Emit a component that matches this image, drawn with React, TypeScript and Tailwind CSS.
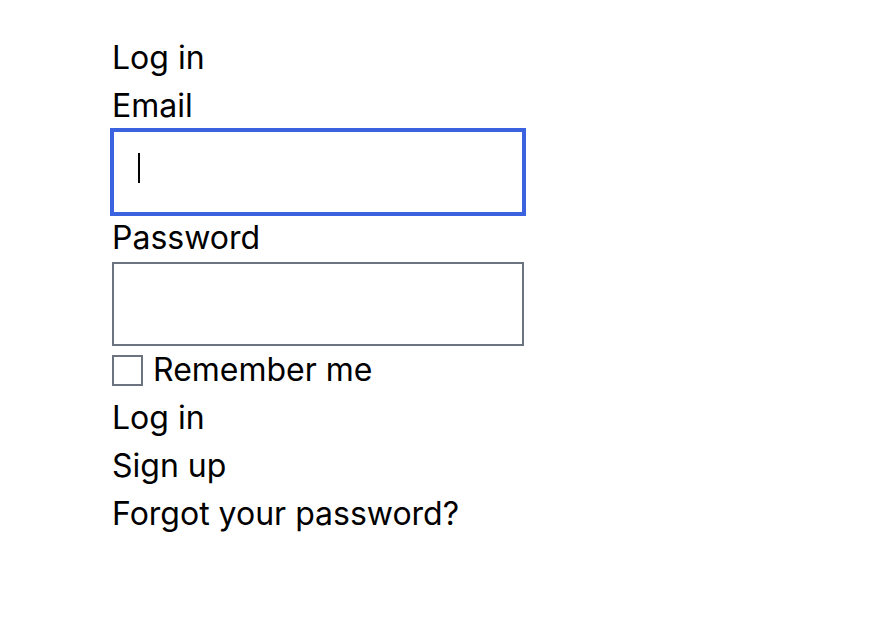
export default function App() {
  return (
    <div className="min-h-[618px] bg-white text-black" style={{ fontFamily: 'Inter, "Noto Sans", sans-serif' }}>
      <form className="flex flex-col pl-[112px] pt-[34px] text-[32px] leading-[48px]">
        <h1 className="h-[48px] font-normal">Log in</h1>
        <label className="h-[48px]">Email</label>
        <div className="flex h-[84px] w-[412px] items-start border-2 border-[#3b63e0] pl-[24px] pt-[21px] outline-2 outline-[#3b63e0]">
          <span className="block h-[30px] w-[2px] bg-black" />
        </div>
        <label className="h-[48px]">Password</label>
        <div className="h-[84px] w-[412px] border-2 border-[#6b7280]" />
        <div className="flex h-[48px] items-center gap-[10px]">
          <span className="block h-[31px] w-[31px] border-2 border-[#6b7280]" />
          <span>Remember me</span>
        </div>
        <a className="h-[48px]">Log in</a>
        <a className="h-[48px]">Sign up</a>
        <a className="h-[48px]">Forgot your password?</a>
      </form>
    </div>
  );
}
